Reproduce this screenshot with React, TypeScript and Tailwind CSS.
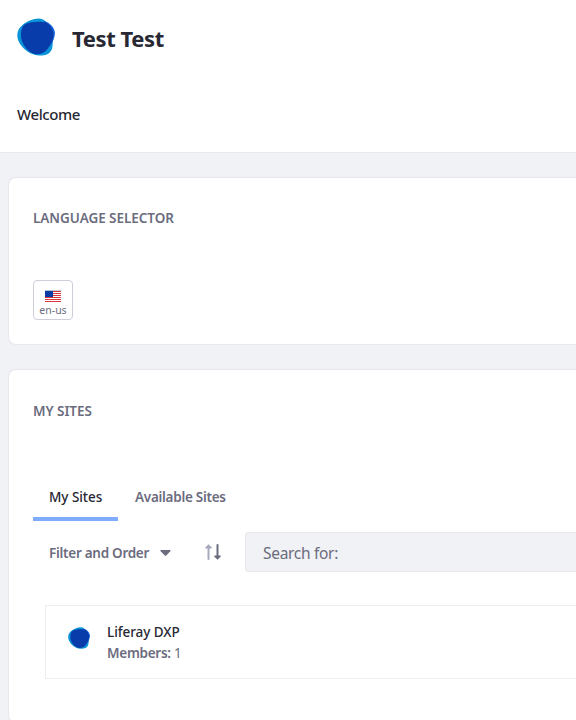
function Blob({ className }: { className: string }) {
  return (
    <svg viewBox="0 0 38 38" className={className} aria-hidden="true">
      <path d="M5 7.5C9 3.5 16 .5 22 .5C27 .5 30 4 33 10C36 17 36.5 27 34.8 31.5C32.5 36.5 28 37.8 22 37.6C10 36.5 .3 26 .3 17.5C.3 13 2 10 5 7.5Z" fill="#0b94d8" />
      <path d="M27 3C33 4.5 38 10 37.9 15.5C37.8 19 36 23.5 34 27L25 18Z" fill="#1263d6" />
      <path d="M8.5 6C14 3.5 24 3.2 29 4.5C33 6.5 36.8 13 36.5 17C36 22 33.5 27.5 30.5 31C27.5 34.8 24 36.2 20 36.2C12 36 4 26 4 17.5C4 12 5 8 8.5 6Z" fill="#083caa" />
    </svg>
  );
}

function Flag() {
  return (
    <svg viewBox="0 0 16 12" className="h-3 w-4 shrink-0" shapeRendering="crispEdges" aria-hidden="true">
      <rect width="16" height="12" fill="#fff" />
      {[1, 3, 5, 7, 9, 11].map((y) => (
        <rect key={y} y={y} width="16" height="1" fill="#d8343b" />
      ))}
      <rect width="16" height="1" fill="#c9ced6" />
      <rect width="8" height="7" y="0" fill="#0a3ba5" />
      <rect width="8" height="1" fill="#b4c5d3" />
    </svg>
  );
}

function SortIcon() {
  return (
    <svg viewBox="0 0 18 16" className="h-4 w-[18px]" aria-hidden="true">
      <path d="M4.5 15V4" stroke="#a7a9bc" strokeWidth="2" strokeLinecap="round" />
      <path d="M1.2 3.4L4.5 .2L7.8 3.4Q8.2 4.5 7 4.5H2Q.8 4.5 1.2 3.4Z" fill="#a7a9bc" />
      <path d="M13.5 1V12" stroke="#6b6c7e" strokeWidth="2" strokeLinecap="round" />
      <path d="M10.2 12.6L13.5 15.8L16.8 12.6Q17.2 11.5 16 11.5H11Q9.8 11.5 10.2 12.6Z" fill="#6b6c7e" />
    </svg>
  );
}

export default function App() {
  return (
    <div className="h-[720px] w-full overflow-hidden bg-[#f1f2f5] font-['Noto_Sans',sans-serif] text-[#272833]">
      <header className="h-[153px] border-b border-[#e7e7ed] bg-white pl-[17px] pt-[18px]">
        <div className="flex h-[38px] items-center gap-[17px]">
          <Blob className="h-[38px] w-[38px]" />
          <h1 className="mt-0.5 whitespace-nowrap text-[22px] font-bold leading-7 tracking-[-0.4px]">Test Test</h1>
        </div>
        <nav className="mt-[46px] text-[15px] font-medium leading-6 tracking-[-0.4px]">Welcome</nav>
      </header>
      <main className="flex flex-col gap-6 pl-2 pt-6">
        <section className="h-[168px] rounded-l-lg border border-r-0 border-[#e7e7ed] bg-white pl-6 pt-[30px]">
          <h2 className="text-[13.5px] font-semibold leading-5 tracking-[-0.05px] text-[#6b6c7e]">LANGUAGE SELECTOR</h2>
          <button className="mt-[52px] flex h-10 w-10 flex-col items-center rounded border border-[#cdced9] bg-white pt-[9px] text-[#6b6c7e]">
            <Flag />
            <span className="mt-0.5 text-[10.5px] leading-3">en-us</span>
          </button>
        </section>
        <section className="h-[354px] shrink-0 rounded-l-lg border border-r-0 border-[#e7e7ed] bg-white pl-6 pt-[31px]">
          <h2 className="text-[13.5px] font-semibold leading-5 tracking-[-0.05px] text-[#6b6c7e]">MY SITES</h2>
          <div className="mt-[53px] flex h-[47px] text-[13.5px] font-semibold leading-5">
            <div className="w-[85px] whitespace-nowrap border-b-4 border-[#80acff] pl-4 pt-[13px] font-medium tracking-[-0.05px]">My Sites</div>
            <div className="whitespace-nowrap pl-[17px] pt-[13px] tracking-[-0.28px] text-[#6b6c7e]">Available Sites</div>
          </div>
          <div className="mt-[11px] flex h-10 items-center">
            <div className="flex w-[171px] items-center pl-4 pt-0.5 text-[13.5px] font-semibold text-[#6b6c7e]">
              <span className="w-[111px] whitespace-nowrap leading-5 tracking-[-0.28px]">Filter and Order</span>
              <svg viewBox="0 0 11 6" className="h-1.5 w-[11px]" aria-hidden="true">
                <path d="M1 0H10Q11 .3 10.3 1.2L6.3 5.5Q5.5 6.2 4.7 5.5L.7 1.2Q0 .3 1 0Z" fill="#6b6c7e" />
              </svg>
            </div>
            <SortIcon />
            <div className="ml-[23px] flex h-10 flex-1 items-center rounded-l border border-r-0 border-[#e7e7ed] bg-[#f1f2f5] pl-[17px] pt-[3px] text-[15.5px] tracking-[-0.3px] text-[#6b6c7e]">Search for:</div>
          </div>
          <div className="ml-3 mt-[33px] flex h-[74px] items-start border border-r-0 border-[#eeeef1] pl-[22px]">
            <Blob className="mt-[21px] h-[22px] w-[22px]" />
            <div className="ml-[17px] mt-4 whitespace-nowrap text-[13.5px] font-semibold leading-[21px]">
              <div className="font-medium tracking-[-0.05px]">Liferay DXP</div>
              <div className="tracking-[-0.28px] text-[#6b6c7e]">Members: <span className="font-normal">1</span></div>
            </div>
          </div>
        </section>
      </main>
    </div>
  );
}
